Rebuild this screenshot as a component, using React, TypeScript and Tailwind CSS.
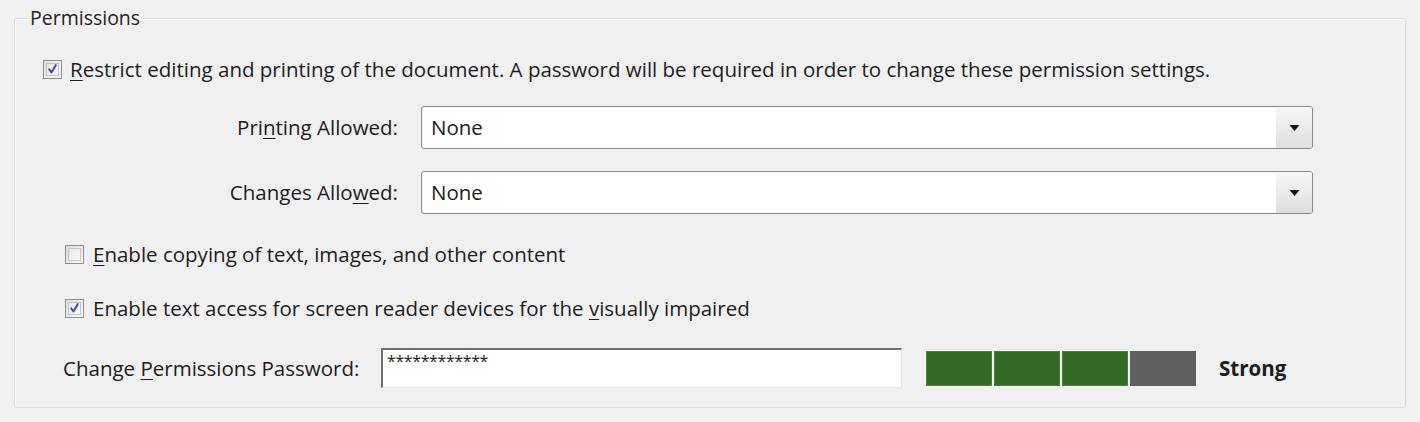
import type { ReactNode } from "react";

// --- Small pieces ---

function CheckBox({ checked }: { checked: boolean }) {
  return (
    <span className="flex h-[19px] w-[19px] shrink-0 items-center justify-center border border-[#8e8f8f] bg-gradient-to-br from-[#dcdcdc] to-[#fbfbfb] p-[2px]">
      <span className="flex h-full w-full items-center justify-center border border-[#c4c4c4] bg-gradient-to-br from-[#e6e6e6] to-[#fafafa]">
        {checked && (
          <svg viewBox="0 0 12 12" className="h-[14px] w-[14px]">
            <path d="M2.4 6.4 L4.9 9.8 L9.6 1.8" fill="none" stroke="#3a4f9e" strokeWidth="2.2" strokeLinejoin="round" strokeLinecap="round" />
          </svg>
        )}
      </span>
    </span>
  );
}

function Select({ value }: { value: string }) {
  return (
    <div className="flex h-[43px] w-[892px] items-stretch rounded-[3px] border border-[#8a8a8a] bg-white shadow-[inset_0_0_0_1px_#f4f4f4]">
      <span className="flex flex-1 items-center pl-[9px]">{value}</span>
      <span className="flex w-[36px] items-center justify-center rounded-r-[2px] bg-gradient-to-b from-[#f7f7f7] to-[#dedede]">
        <svg viewBox="0 0 10 6" className="h-[6px] w-[11px]">
          <path d="M0 0 H10 L5 6 Z" fill="#111" />
        </svg>
      </span>
    </div>
  );
}

function Key({ children }: { children: ReactNode }) {
  return <span className="underline decoration-1 underline-offset-[3px]">{children}</span>;
}

// --- Component ---

export default function App() {
  return (
    <div
      className="h-[422px] w-[1420px] bg-[#f0f0f0] px-[14px] pt-[5px] text-[20.5px] text-[#1c1c1c]"
      style={{ fontFamily: '"Open Sans", "Noto Sans", sans-serif' }}
    >
      <fieldset className="h-[403px] w-[1392px] rounded-[3px] border border-[#d5dde3] pl-[28px] shadow-[inset_1px_1px_0_#fdfdfd]">
        <legend className="ml-[-16px] px-[3px] text-[19.5px] leading-[26px] text-[#222]">Permissions</legend>

        {/* Restrict checkbox */}
        <div className="mt-[26px] flex items-center gap-[8px] leading-[24px]">
          <CheckBox checked />
          <span>
            <Key>R</Key>estrict editing and printing of the document. A password will be required in order to change
            these permission settings.
          </span>
        </div>

        {/* Selects */}
        <div className="mt-[25px] flex items-center gap-[23px]">
          <span className="w-[355px] text-right">
            Pri<Key>n</Key>ting Allowed:
          </span>
          <Select value="None" />
        </div>
        <div className="mt-[22px] flex items-center gap-[23px]">
          <span className="w-[355px] text-right">
            Changes Allo<Key>w</Key>ed:
          </span>
          <Select value="None" />
        </div>

        {/* Options */}
        <div className="ml-[22px] mt-[28px] flex items-center gap-[9px] leading-[24px]">
          <CheckBox checked={false} />
          <span>
            <Key>E</Key>nable copying of text, images, and other content
          </span>
        </div>
        <div className="ml-[22px] mt-[30px] flex items-center gap-[9px] leading-[24px]">
          <CheckBox checked />
          <span>
            Enable text access for screen reader devices for the <Key>v</Key>isually impaired
          </span>
        </div>

        {/* Password */}
        <div className="ml-[20px] mt-[28px] flex items-center">
          <span className="w-[318px]">
            Change <Key>P</Key>ermissions Password:
          </span>
          <div className="flex h-[40px] w-[521px] items-start border-l-2 border-t-2 border-r border-b border-l-[#6f6f6f] border-t-[#6f6f6f] border-r-[#e4e4e4] border-b-[#e4e4e4] bg-white pl-[4px] pt-[2px] text-[16px] leading-[18px] tracking-[-0.4px]">
            ************
          </div>
          <div className="ml-[24px] flex h-[35px] gap-[2px]">
            <span className="w-[66px] bg-[#336a23] shadow-[inset_0_0_0_1px_#4a8037]" />
            <span className="w-[66px] bg-[#336a23] shadow-[inset_0_0_0_1px_#4a8037]" />
            <span className="w-[66px] bg-[#336a23] shadow-[inset_0_0_0_1px_#4a8037]" />
            <span className="w-[66px] bg-[#5f5f5f]" />
          </div>
          <span className="ml-[23px] font-bold">Strong</span>
        </div>
      </fieldset>
    </div>
  );
}
